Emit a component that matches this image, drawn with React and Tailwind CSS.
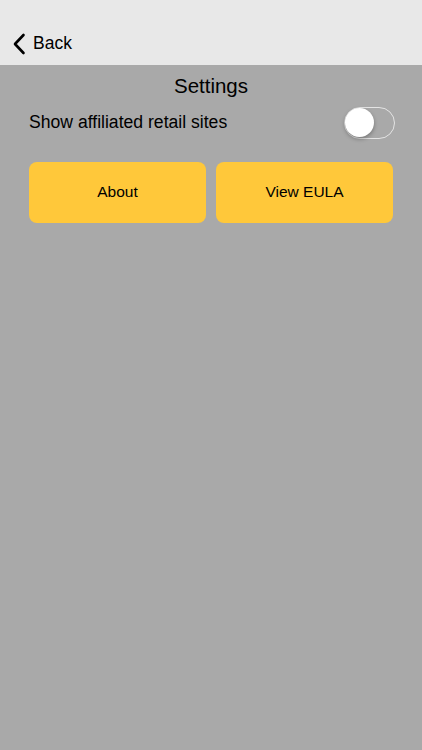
const App = () => {
    return (
        <div className="min-h-[750px] bg-[#a9a9a9] font-['Helvetica','Liberation_Sans',sans-serif] text-black">
            {/* Nav bar */}
            <div className="h-[65px] bg-[#e8e8e8] flex items-end pb-[10px] pl-[12px]">
                <button className="flex items-center gap-[7px]">
                    <svg width="14" height="22" viewBox="0 0 14 22" fill="none">
                        <path d="M11.5 2 L3 11 L11.5 20" stroke="#000" strokeWidth="2.6" strokeLinecap="round" strokeLinejoin="round" />
                    </svg>
                    <span className="text-[17.5px] leading-none">Back</span>
                </button>
            </div>

            {/* Settings */}
            <div className="px-[29px]">
                <h1 className="text-center text-[20.5px] leading-none pt-[11px]">Settings</h1>
                <div className="flex items-center justify-between mt-[10px]">
                    <span className="text-[17.6px]">Show affiliated retail sites</span>
                    <div className="relative w-[51px] h-[32px] mr-[-2px] rounded-full border-[1.5px] border-[#e4e4e4]">
                        <div className="absolute left-[0px] top-[0px] w-[29px] h-[29px] rounded-full bg-white shadow-[0_2px_4px_rgba(0,0,0,0.3)]" />
                    </div>
                </div>
                <div className="grid grid-cols-2 gap-[10px] mt-[23px]">
                    <button className="h-[61px] rounded-[8px] bg-[#ffc83a] text-[15.5px]">About</button>
                    <button className="h-[61px] rounded-[8px] bg-[#ffc83a] text-[15.5px]">View EULA</button>
                </div>
            </div>
        </div>
    )
};

export default App;
